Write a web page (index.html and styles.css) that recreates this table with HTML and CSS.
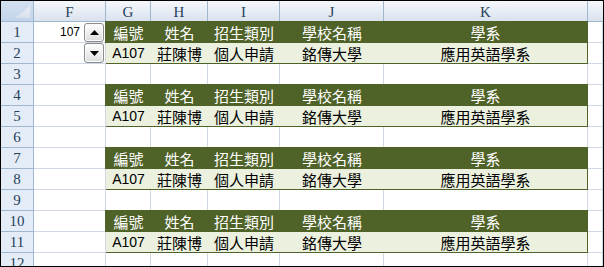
FILE: index.html
```html
<!DOCTYPE html>
<html lang="zh-Hant">
<head>
<meta charset="utf-8">
<title>Sheet</title>
<link rel="stylesheet" href="styles.css">
</head>
<body>
<div class="sheet">
  <div class="corner"><svg width="15" height="12" viewBox="0 0 15 12"><defs><linearGradient id="tg" x1="0" y1="0" x2="0" y2="1"><stop offset="0" stop-color="#E9EEF5"/><stop offset="1" stop-color="#D9E0EA"/></linearGradient></defs><polygon points="15,0 15,12 0,12" fill="url(#tg)"/></svg></div>
  <div class="ch">F</div><div class="ch">G</div><div class="ch">H</div><div class="ch">I</div><div class="ch">J</div><div class="ch">K</div><div class="ch last"></div>

  <div class="rh">1</div><div class="c val">107</div>
  <div class="tbl">
    <div class="th">編號</div><div class="th">姓名</div><div class="th">招生類別</div><div class="th">學校名稱</div><div class="th">學系</div>
    <div class="td code">A107</div><div class="td">莊陳博</div><div class="td">個人申請</div><div class="td">銘傳大學</div><div class="td">應用英語學系</div>
  </div>
  <div class="c"></div>
  <div class="rh">2</div><div class="c"></div><div class="c"></div>
  <div class="rh">3</div><div class="c"></div><div class="c"></div><div class="c"></div><div class="c"></div><div class="c"></div><div class="c"></div><div class="c"></div>

  <div class="rh">4</div><div class="c"></div>
  <div class="tbl">
    <div class="th">編號</div><div class="th">姓名</div><div class="th">招生類別</div><div class="th">學校名稱</div><div class="th">學系</div>
    <div class="td code">A107</div><div class="td">莊陳博</div><div class="td">個人申請</div><div class="td">銘傳大學</div><div class="td">應用英語學系</div>
  </div>
  <div class="c"></div>
  <div class="rh">5</div><div class="c"></div><div class="c"></div>
  <div class="rh">6</div><div class="c"></div><div class="c"></div><div class="c"></div><div class="c"></div><div class="c"></div><div class="c"></div><div class="c"></div>

  <div class="rh">7</div><div class="c"></div>
  <div class="tbl">
    <div class="th">編號</div><div class="th">姓名</div><div class="th">招生類別</div><div class="th">學校名稱</div><div class="th">學系</div>
    <div class="td code">A107</div><div class="td">莊陳博</div><div class="td">個人申請</div><div class="td">銘傳大學</div><div class="td">應用英語學系</div>
  </div>
  <div class="c"></div>
  <div class="rh">8</div><div class="c"></div><div class="c"></div>
  <div class="rh">9</div><div class="c"></div><div class="c"></div><div class="c"></div><div class="c"></div><div class="c"></div><div class="c"></div><div class="c"></div>

  <div class="rh">10</div><div class="c"></div>
  <div class="tbl">
    <div class="th">編號</div><div class="th">姓名</div><div class="th">招生類別</div><div class="th">學校名稱</div><div class="th">學系</div>
    <div class="td code">A107</div><div class="td">莊陳博</div><div class="td">個人申請</div><div class="td">銘傳大學</div><div class="td">應用英語學系</div>
  </div>
  <div class="c"></div>
  <div class="rh">11</div><div class="c"></div><div class="c"></div>
  <div class="rh">12</div><div class="c"></div><div class="c"></div><div class="c"></div><div class="c"></div><div class="c"></div><div class="c"></div><div class="c"></div>

  <div class="spin">
    <div class="btn"><svg width="9" height="5" viewBox="0 0 9 5"><polygon points="4.5,0 9,5 0,5" fill="#000"/></svg></div>
    <div class="btn down"><svg width="9" height="5" viewBox="0 0 9 5"><polygon points="0,0 9,0 4.5,5" fill="#000"/></svg></div>
  </div>
</div>
</body>
</html>
```
FILE: styles.css
```css
* { box-sizing: border-box; }
body { margin: 0; background: #fff; }

.sheet {
  width: 604px;
  height: 267px;
  border: 1px solid #000;
  position: relative;
  overflow: hidden;
  display: grid;
  grid-template-columns: 33px 72px 45px 57px 72px 104px 204px 15px;
  grid-template-rows: repeat(13, 21px);
  font-family: "Liberation Sans", Arial, sans-serif;
  background: #fff;
}

.corner {
  background: linear-gradient(#D3E0F1, #C3D4EA);
  border-right: 1px solid #9EB6CE;
  border-bottom: 1px solid #9EB6CE;
  display: flex;
  justify-content: flex-end;
  align-items: flex-end;
  padding: 0 3px 3px 0;
}
.corner svg { display: block; }

.ch {
  background: linear-gradient(#F6F8FB, #E6ECF4 55%, #DAE2EE);
  border-right: 1px solid #9EB6CE;
  border-bottom: 1px solid #9EB6CE;
  display: flex;
  align-items: center;
  justify-content: center;
  padding-top: 2px;
  font: 15px "Liberation Serif", "Times New Roman", serif;
  color: #27425A;
}
.ch.last { border-right: 0; }

.rh {
  background: #E4ECF7;
  border-right: 1px solid #9EB6CE;
  border-bottom: 1px solid #9EB6CE;
  display: flex;
  align-items: center;
  justify-content: center;
  padding-top: 1px;
  font: 15px "Liberation Serif", "Times New Roman", serif;
  color: #27425A;
}

.c {
  border-right: 1px solid #D0D7E5;
  border-bottom: 1px solid #D0D7E5;
}
.c.val {
  display: flex;
  align-items: center;
  justify-content: flex-end;
  padding-right: 25px;
  font-size: 12px;
  color: #000;
}

.tbl {
  grid-column: span 5;
  grid-row: span 2;
  margin: -1px 0 0 -1px;
  border: 1px solid #4F6228;
  display: grid;
  grid-template-columns: 45px 57px 72px 104px 1fr;
  grid-template-rows: 21px 20px;
}
.th, .td {
  display: flex;
  align-items: center;
  justify-content: center;
  font: 15px/1 "Noto Sans CJK TC", "Noto Sans CJK SC", sans-serif;
  white-space: nowrap;
}
.th { background: #4F6228; color: #fff; }
.td { background: #EBF1DE; color: #000; }
.td.code { font: 14px/1 "Liberation Sans", Arial, sans-serif; }

.spin {
  position: absolute;
  left: 83px;
  top: 22px;
  width: 20px;
  display: flex;
  flex-direction: column;
  gap: 1px;
}
.btn {
  height: 19px;
  border: 1px solid #8A8C8E;
  border-radius: 3px;
  background: linear-gradient(#FFFFFF, #F0F0F0 45%, #DCDCDC);
  box-shadow: inset 0 0 0 1px #FAFAFA;
  display: flex;
  align-items: center;
  justify-content: center;
}
.btn.down { height: 20px; }
.btn svg { display: block; }
```
